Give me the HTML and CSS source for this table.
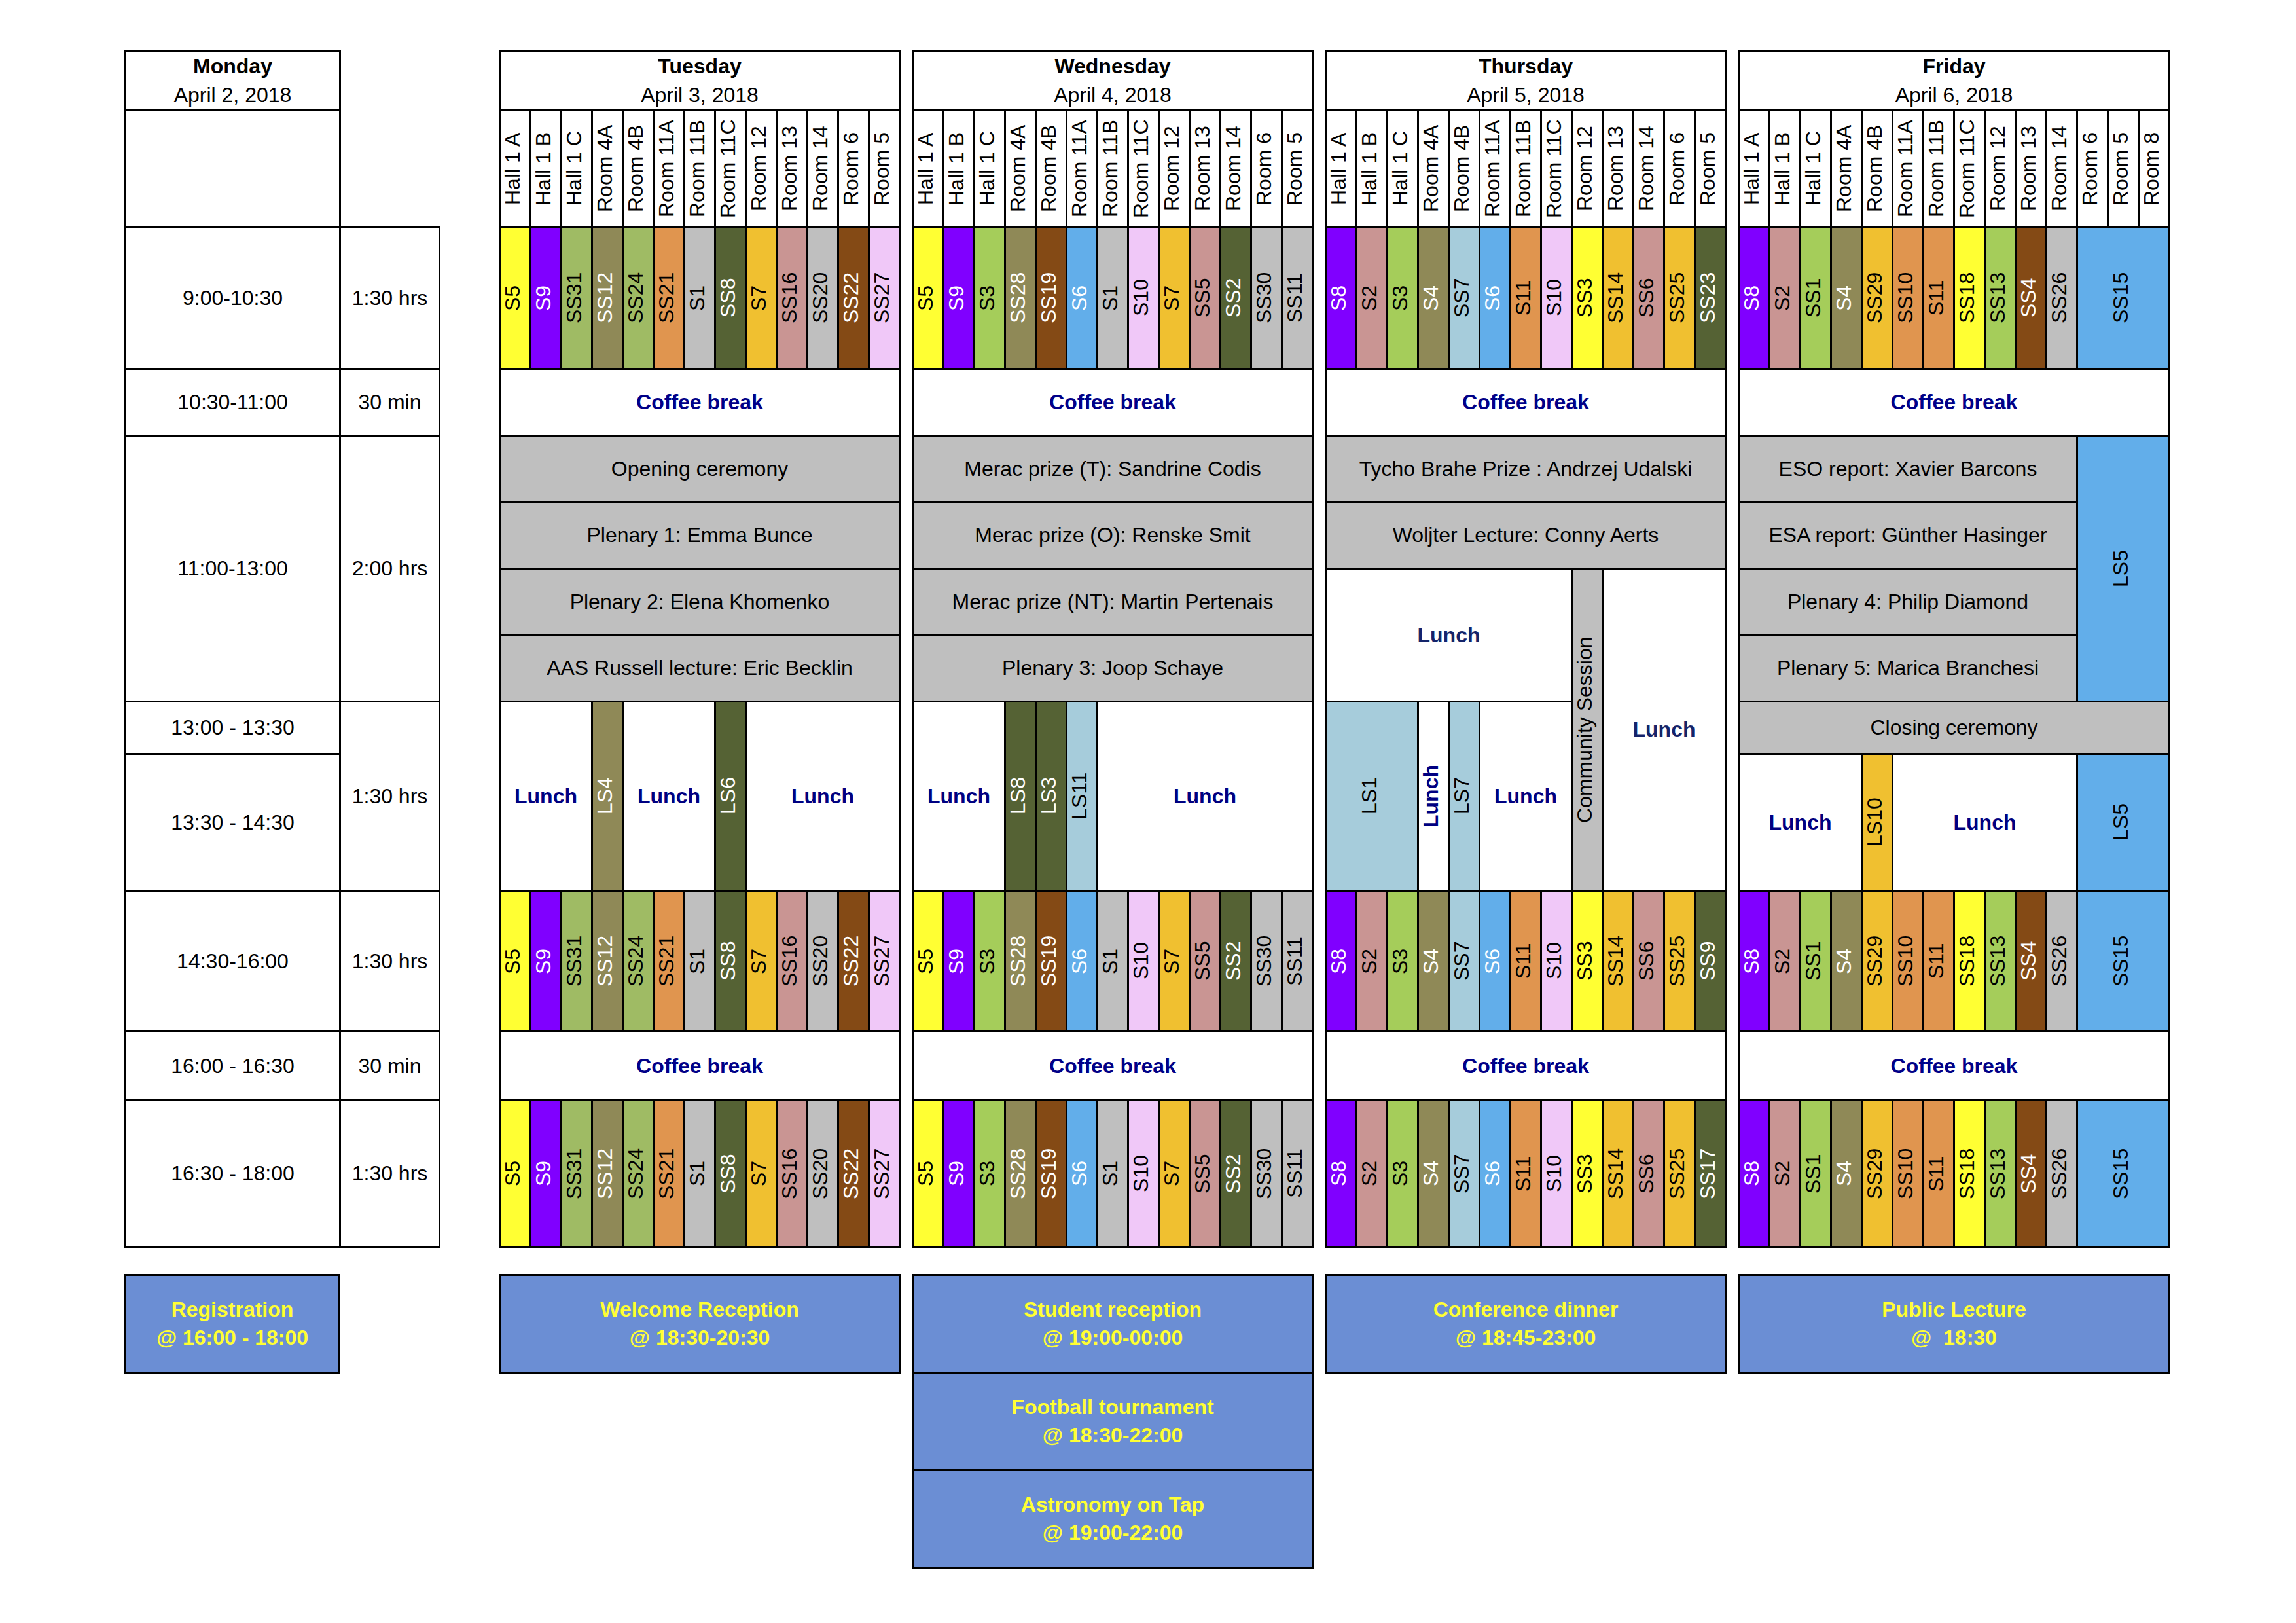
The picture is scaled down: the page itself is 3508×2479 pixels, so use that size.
FILE: index.html
```html
<!DOCTYPE html>
<html lang="en">
<head>
<meta charset="utf-8">
<title>Conference timetable</title>
<link rel="stylesheet" href="styles.css">
</head>
<body>
<div class="page">

  <!-- Monday + time column -->
  <div class="mon-col">
    <div class="grid mgrid">
      <div class="cell hdr"><b>Monday</b><span>April 2, 2018</span></div>
      <div class="cell r2 spacer"></div>
      <div class="cell"></div>
      <div class="cell">9:00-10:30</div>
      <div class="cell">1:30 hrs</div>
      <div class="cell">10:30-11:00</div>
      <div class="cell">30 min</div>
      <div class="cell r4">11:00-13:00</div>
      <div class="cell r4">2:00 hrs</div>
      <div class="cell">13:00 - 13:30</div>
      <div class="cell r2">1:30 hrs</div>
      <div class="cell">13:30 - 14:30</div>
      <div class="cell">14:30-16:00</div>
      <div class="cell">1:30 hrs</div>
      <div class="cell">16:00 - 16:30</div>
      <div class="cell">30 min</div>
      <div class="cell">16:30 - 18:00</div>
      <div class="cell">1:30 hrs</div>
    </div>
    <div class="events mon-ev">
      <div class="ev"><span>Registration</span><span>@ 16:00 - 18:00</span></div>
    </div>
  </div>

  <!-- Tuesday -->
  <div class="day-col">
    <div class="grid g13">
      <div class="cell hdr s13"><b>Tuesday</b><span>April 3, 2018</span></div>
      <div class="cell v">Hall 1 A</div>
      <div class="cell v">Hall 1 B</div>
      <div class="cell v">Hall 1 C</div>
      <div class="cell v">Room 4A</div>
      <div class="cell v">Room 4B</div>
      <div class="cell v">Room 11A</div>
      <div class="cell v">Room 11B</div>
      <div class="cell v">Room 11C</div>
      <div class="cell v">Room 12</div>
      <div class="cell v">Room 13</div>
      <div class="cell v">Room 14</div>
      <div class="cell v">Room 6</div>
      <div class="cell v">Room 5</div>

      <div class="cell v yel">S5</div>
      <div class="cell v pur w">S9</div>
      <div class="cell v grn2">SS31</div>
      <div class="cell v olv w">SS12</div>
      <div class="cell v grn2">SS24</div>
      <div class="cell v org">SS21</div>
      <div class="cell v gry">S1</div>
      <div class="cell v dol w">SS8</div>
      <div class="cell v amb">S7</div>
      <div class="cell v pnk">SS16</div>
      <div class="cell v gry">SS20</div>
      <div class="cell v brn w">SS22</div>
      <div class="cell v lav">SS27</div>

      <div class="cell s13 coffee">Coffee break</div>
      <div class="cell s13 plen">Opening ceremony</div>
      <div class="cell s13 plen">Plenary 1: Emma Bunce</div>
      <div class="cell s13 plen">Plenary 2: Elena Khomenko</div>
      <div class="cell s13 plen">AAS Russell lecture: Eric Becklin</div>

      <div class="cell s3 r2 lunch">Lunch</div>
      <div class="cell v r2 olv w">LS4</div>
      <div class="cell s3 r2 lunch">Lunch</div>
      <div class="cell v r2 dol w">LS6</div>
      <div class="cell s5 r2 lunch">Lunch</div>

      <div class="cell v yel">S5</div>
      <div class="cell v pur w">S9</div>
      <div class="cell v grn2">SS31</div>
      <div class="cell v olv w">SS12</div>
      <div class="cell v grn2">SS24</div>
      <div class="cell v org">SS21</div>
      <div class="cell v gry">S1</div>
      <div class="cell v dol w">SS8</div>
      <div class="cell v amb">S7</div>
      <div class="cell v pnk">SS16</div>
      <div class="cell v gry">SS20</div>
      <div class="cell v brn w">SS22</div>
      <div class="cell v lav">SS27</div>

      <div class="cell s13 coffee">Coffee break</div>

      <div class="cell v yel">S5</div>
      <div class="cell v pur w">S9</div>
      <div class="cell v grn2">SS31</div>
      <div class="cell v olv w">SS12</div>
      <div class="cell v grn2">SS24</div>
      <div class="cell v org">SS21</div>
      <div class="cell v gry">S1</div>
      <div class="cell v dol w">SS8</div>
      <div class="cell v amb">S7</div>
      <div class="cell v pnk">SS16</div>
      <div class="cell v gry">SS20</div>
      <div class="cell v brn w">SS22</div>
      <div class="cell v lav">SS27</div>
    </div>
    <div class="events">
      <div class="ev"><span>Welcome Reception</span><span>@ 18:30-20:30</span></div>
    </div>
  </div>

  <!-- Wednesday -->
  <div class="day-col">
    <div class="grid g13">
      <div class="cell hdr s13"><b>Wednesday</b><span>April 4, 2018</span></div>
      <div class="cell v">Hall 1 A</div>
      <div class="cell v">Hall 1 B</div>
      <div class="cell v">Hall 1 C</div>
      <div class="cell v">Room 4A</div>
      <div class="cell v">Room 4B</div>
      <div class="cell v">Room 11A</div>
      <div class="cell v">Room 11B</div>
      <div class="cell v">Room 11C</div>
      <div class="cell v">Room 12</div>
      <div class="cell v">Room 13</div>
      <div class="cell v">Room 14</div>
      <div class="cell v">Room 6</div>
      <div class="cell v">Room 5</div>

      <div class="cell v yel">S5</div>
      <div class="cell v pur w">S9</div>
      <div class="cell v grn">S3</div>
      <div class="cell v olv w">SS28</div>
      <div class="cell v brn w">SS19</div>
      <div class="cell v blu w">S6</div>
      <div class="cell v gry">S1</div>
      <div class="cell v lav">S10</div>
      <div class="cell v amb">S7</div>
      <div class="cell v pnk">SS5</div>
      <div class="cell v dol w">SS2</div>
      <div class="cell v gry">SS30</div>
      <div class="cell v gry">SS11</div>

      <div class="cell s13 coffee">Coffee break</div>
      <div class="cell s13 plen">Merac prize (T): Sandrine Codis</div>
      <div class="cell s13 plen">Merac prize (O): Renske Smit</div>
      <div class="cell s13 plen">Merac prize (NT): Martin Pertenais</div>
      <div class="cell s13 plen">Plenary 3: Joop Schaye</div>

      <div class="cell s3 r2 lunch">Lunch</div>
      <div class="cell v r2 dol w">LS8</div>
      <div class="cell v r2 dol w">LS3</div>
      <div class="cell v r2 lbl">LS11</div>
      <div class="cell s7 r2 lunch">Lunch</div>

      <div class="cell v yel">S5</div>
      <div class="cell v pur w">S9</div>
      <div class="cell v grn">S3</div>
      <div class="cell v olv w">SS28</div>
      <div class="cell v brn w">SS19</div>
      <div class="cell v blu w">S6</div>
      <div class="cell v gry">S1</div>
      <div class="cell v lav">S10</div>
      <div class="cell v amb">S7</div>
      <div class="cell v pnk">SS5</div>
      <div class="cell v dol w">SS2</div>
      <div class="cell v gry">SS30</div>
      <div class="cell v gry">SS11</div>

      <div class="cell s13 coffee">Coffee break</div>

      <div class="cell v yel">S5</div>
      <div class="cell v pur w">S9</div>
      <div class="cell v grn">S3</div>
      <div class="cell v olv w">SS28</div>
      <div class="cell v brn w">SS19</div>
      <div class="cell v blu w">S6</div>
      <div class="cell v gry">S1</div>
      <div class="cell v lav">S10</div>
      <div class="cell v amb">S7</div>
      <div class="cell v pnk">SS5</div>
      <div class="cell v dol w">SS2</div>
      <div class="cell v gry">SS30</div>
      <div class="cell v gry">SS11</div>
    </div>
    <div class="events">
      <div class="ev"><span>Student reception</span><span>@ 19:00-00:00</span></div>
      <div class="ev"><span>Football tournament</span><span>@ 18:30-22:00</span></div>
      <div class="ev"><span>Astronomy on Tap</span><span>@ 19:00-22:00</span></div>
    </div>
  </div>

  <!-- Thursday -->
  <div class="day-col">
    <div class="grid g13">
      <div class="cell hdr s13"><b>Thursday</b><span>April 5, 2018</span></div>
      <div class="cell v">Hall 1 A</div>
      <div class="cell v">Hall 1 B</div>
      <div class="cell v">Hall 1 C</div>
      <div class="cell v">Room 4A</div>
      <div class="cell v">Room 4B</div>
      <div class="cell v">Room 11A</div>
      <div class="cell v">Room 11B</div>
      <div class="cell v">Room 11C</div>
      <div class="cell v">Room 12</div>
      <div class="cell v">Room 13</div>
      <div class="cell v">Room 14</div>
      <div class="cell v">Room 6</div>
      <div class="cell v">Room 5</div>

      <div class="cell v pur w">S8</div>
      <div class="cell v pnk">S2</div>
      <div class="cell v grn">S3</div>
      <div class="cell v olv w">S4</div>
      <div class="cell v lbl">SS7</div>
      <div class="cell v blu w">S6</div>
      <div class="cell v org">S11</div>
      <div class="cell v lav">S10</div>
      <div class="cell v yel">SS3</div>
      <div class="cell v amb">SS14</div>
      <div class="cell v pnk">SS6</div>
      <div class="cell v amb">SS25</div>
      <div class="cell v dol w">SS23</div>

      <div class="cell s13 coffee">Coffee break</div>
      <div class="cell s13 plen">Tycho Brahe Prize : Andrzej Udalski</div>
      <div class="cell s13 plen">Woljter Lecture: Conny Aerts</div>

      <div class="cell s8 r2 lunch lunch2">Lunch</div>
      <div class="cell v r4 gry">Community Session</div>
      <div class="cell s4 r4 lunch lunch2">Lunch</div>
      <div class="cell v s3 r2 lbl">LS1</div>
      <div class="cell v r2 lunch">Lunch</div>
      <div class="cell v r2 lbl">LS7</div>
      <div class="cell s3 r2 lunch">Lunch</div>

      <div class="cell v pur w">S8</div>
      <div class="cell v pnk">S2</div>
      <div class="cell v grn">S3</div>
      <div class="cell v olv w">S4</div>
      <div class="cell v lbl">SS7</div>
      <div class="cell v blu w">S6</div>
      <div class="cell v org">S11</div>
      <div class="cell v lav">S10</div>
      <div class="cell v yel">SS3</div>
      <div class="cell v amb">SS14</div>
      <div class="cell v pnk">SS6</div>
      <div class="cell v amb">SS25</div>
      <div class="cell v dol w">SS9</div>

      <div class="cell s13 coffee">Coffee break</div>

      <div class="cell v pur w">S8</div>
      <div class="cell v pnk">S2</div>
      <div class="cell v grn">S3</div>
      <div class="cell v olv w">S4</div>
      <div class="cell v lbl">SS7</div>
      <div class="cell v blu w">S6</div>
      <div class="cell v org">S11</div>
      <div class="cell v lav">S10</div>
      <div class="cell v yel">SS3</div>
      <div class="cell v amb">SS14</div>
      <div class="cell v pnk">SS6</div>
      <div class="cell v amb">SS25</div>
      <div class="cell v dol w">SS17</div>
    </div>
    <div class="events">
      <div class="ev"><span>Conference dinner</span><span>@ 18:45-23:00</span></div>
    </div>
  </div>

  <!-- Friday -->
  <div class="day-col">
    <div class="grid g14">
      <div class="cell hdr s14"><b>Friday</b><span>April 6, 2018</span></div>
      <div class="cell v">Hall 1 A</div>
      <div class="cell v">Hall 1 B</div>
      <div class="cell v">Hall 1 C</div>
      <div class="cell v">Room 4A</div>
      <div class="cell v">Room 4B</div>
      <div class="cell v">Room 11A</div>
      <div class="cell v">Room 11B</div>
      <div class="cell v">Room 11C</div>
      <div class="cell v">Room 12</div>
      <div class="cell v">Room 13</div>
      <div class="cell v">Room 14</div>
      <div class="cell v">Room 6</div>
      <div class="cell v">Room 5</div>
      <div class="cell v">Room 8</div>

      <div class="cell v pur w">S8</div>
      <div class="cell v pnk">S2</div>
      <div class="cell v grn">SS1</div>
      <div class="cell v olv w">S4</div>
      <div class="cell v amb">SS29</div>
      <div class="cell v org">SS10</div>
      <div class="cell v org">S11</div>
      <div class="cell v yel">SS18</div>
      <div class="cell v grn">SS13</div>
      <div class="cell v brn w">SS4</div>
      <div class="cell v gry">SS26</div>
      <div class="cell v s3 blu">SS15</div>

      <div class="cell s14 coffee">Coffee break</div>
      <div class="cell s11 plen">ESO report: Xavier Barcons</div>
      <div class="cell v s3 r4 blu">LS5</div>
      <div class="cell s11 plen">ESA report: Günther Hasinger</div>
      <div class="cell s11 plen">Plenary 4: Philip Diamond</div>
      <div class="cell s11 plen">Plenary 5: Marica Branchesi</div>
      <div class="cell s14 plen">Closing ceremony</div>

      <div class="cell s4 lunch">Lunch</div>
      <div class="cell v amb">LS10</div>
      <div class="cell s6 lunch">Lunch</div>
      <div class="cell v s3 blu">LS5</div>

      <div class="cell v pur w">S8</div>
      <div class="cell v pnk">S2</div>
      <div class="cell v grn">SS1</div>
      <div class="cell v olv w">S4</div>
      <div class="cell v amb">SS29</div>
      <div class="cell v org">SS10</div>
      <div class="cell v org">S11</div>
      <div class="cell v yel">SS18</div>
      <div class="cell v grn">SS13</div>
      <div class="cell v brn w">SS4</div>
      <div class="cell v gry">SS26</div>
      <div class="cell v s3 blu">SS15</div>

      <div class="cell s14 coffee">Coffee break</div>

      <div class="cell v pur w">S8</div>
      <div class="cell v pnk">S2</div>
      <div class="cell v grn">SS1</div>
      <div class="cell v olv w">S4</div>
      <div class="cell v amb">SS29</div>
      <div class="cell v org">SS10</div>
      <div class="cell v org">S11</div>
      <div class="cell v yel">SS18</div>
      <div class="cell v grn">SS13</div>
      <div class="cell v brn w">SS4</div>
      <div class="cell v gry">SS26</div>
      <div class="cell v s3 blu">SS15</div>
    </div>
    <div class="events">
      <div class="ev"><span>Public Lecture</span><span>@&nbsp; 18:30</span></div>
    </div>
  </div>

</div>
</body>
</html>
```

FILE: styles.css
```css
* { box-sizing: border-box; }

html, body {
  margin: 0;
  padding: 0;
  background: #fff;
}

body {
  width: 3508px;
  height: 2479px;
  overflow: hidden;
  font-family: "Liberation Sans", Arial, sans-serif;
  font-size: 32px;
  color: #000;
}

.page {
  display: flex;
  align-items: flex-start;
  gap: 17px;
  padding: 76px 0 0 190px;
}

.mon-col {
  width: 483px;
  margin-right: 72px;
  display: flex;
  flex-direction: column;
}

.day-col {
  display: flex;
  flex-direction: column;
}

/* table grids: black background shows through the gaps as rules */
.grid {
  display: grid;
  background: #000;
  gap: 3px;
  padding: 3px;
  grid-template-rows: 88px 175px 214px 99px 98px 99px 98px 99px 77px 206px 212px 102px 221px;
}

.mgrid { grid-template-columns: 325px 149px; }
.g13 { grid-template-columns: repeat(13, 44px); }
.g14 { grid-template-columns: repeat(14, 44px); }

.cell {
  background: #fff;
  display: flex;
  align-items: center;
  justify-content: center;
  text-align: center;
  white-space: nowrap;
  line-height: 1.15;
}

.spacer { margin: -3px -3px 0 0; }

.hdr {
  flex-direction: column;
  line-height: 44px;
}
.hdr b { font-weight: bold; }

/* vertical labels, reading bottom to top */
.v {
  writing-mode: vertical-rl;
  transform: rotate(180deg);
  padding-left: 8px;
}

/* spans */
.s3 { grid-column: span 3; }
.s4 { grid-column: span 4; }
.s5 { grid-column: span 5; }
.s6 { grid-column: span 6; }
.s7 { grid-column: span 7; }
.s8 { grid-column: span 8; }
.s11 { grid-column: span 11; }
.s13 { grid-column: span 13; }
.s14 { grid-column: span 14; }
.r2 { grid-row: span 2; }
.r4 { grid-row: span 4; }

/* content kinds */
.coffee { font-weight: bold; color: #000088; }
.lunch { font-weight: bold; color: #000080; }
.lunch2 { color: #14246a; }
.plen { background: #bfbfbf; }

/* session colours */
.yel { background: #ffff33; }
.pur { background: #8000ff; }
.grn { background: #a5cd5a; }
.grn2 { background: #9fbb64; }
.olv { background: #8f8957; }
.org { background: #e0954f; }
.gry { background: #bfbfbf; }
.dol { background: #556234; }
.amb { background: #f0c030; }
.pnk { background: #c99593; }
.brn { background: #844a15; }
.lav { background: #f0c8f8; }
.blu { background: #62aeea; }
.lbl { background: #a6ccdb; }
.w { color: #fff; }

/* evening events */
.events {
  margin-top: 40px;
  display: flex;
  flex-direction: column;
}
.mon-ev { width: 330px; }

.ev {
  height: 152px;
  border: 3px solid #000;
  background: #6b8ed4;
  color: #ffff33;
  font-weight: bold;
  display: flex;
  flex-direction: column;
  justify-content: center;
  align-items: center;
  line-height: 43px;
  white-space: nowrap;
}
.ev + .ev { margin-top: -3px; }
```
